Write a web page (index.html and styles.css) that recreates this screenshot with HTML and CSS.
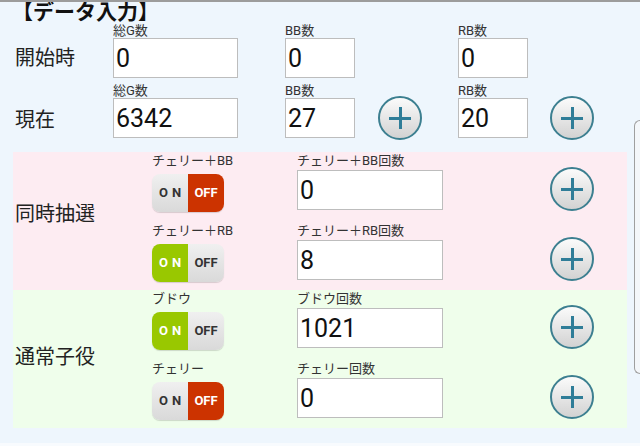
FILE: index.html
```html
<!DOCTYPE html>
<html lang="ja">

<head>
    <meta charset="UTF-8">
    <meta name="viewport" content="width=device-width, initial-scale=1.0">
    <title>データ入力</title>
    <link rel="stylesheet" href="styles.css">
</head>

<body>
    <div class="page">

        <h2 class="title">【データ入力】</h2>

        <div class="counts">
            <div class="row-name">開始時</div>
            <div class="field">
                <p class="cap">総G数</p>
                <input type="text" class="num wide" value="0">
            </div>
            <div class="field">
                <p class="cap">BB数</p>
                <input type="text" class="num short" value="0">
            </div>
            <div></div>
            <div class="field">
                <p class="cap">RB数</p>
                <input type="text" class="num short" value="0">
            </div>
            <div></div>

            <div class="row-name">現在</div>
            <div class="field">
                <p class="cap">総G数</p>
                <input type="text" class="num wide" value="6342">
            </div>
            <div class="field">
                <p class="cap">BB数</p>
                <input type="text" class="num short" value="27">
            </div>
            <div class="field">
                <p class="cap"></p>
                <button class="plus"></button>
            </div>
            <div class="field">
                <p class="cap">RB数</p>
                <input type="text" class="num short" value="20">
            </div>
            <div class="field">
                <p class="cap"></p>
                <button class="plus"></button>
            </div>
        </div>

        <section class="group pink">
            <div class="group-name">同時抽選</div>
            <div class="rows">
                <div class="item">
                    <p class="cap">チェリー＋BB</p>
                    <p class="cap">チェリー＋BB回数</p>
                    <p class="cap"></p>
                    <div class="toggle off"><span class="on-side">ON</span><span class="off-side">OFF</span></div>
                    <input type="text" class="num long" value="0">
                    <button class="plus"></button>
                </div>
                <div class="item">
                    <p class="cap">チェリー＋RB</p>
                    <p class="cap">チェリー＋RB回数</p>
                    <p class="cap"></p>
                    <div class="toggle on"><span class="on-side">ON</span><span class="off-side">OFF</span></div>
                    <input type="text" class="num long" value="8">
                    <button class="plus"></button>
                </div>
            </div>
        </section>

        <section class="group green">
            <div class="group-name">通常子役</div>
            <div class="rows">
                <div class="item">
                    <p class="cap">ブドウ</p>
                    <p class="cap">ブドウ回数</p>
                    <p class="cap"></p>
                    <div class="toggle on"><span class="on-side">ON</span><span class="off-side">OFF</span></div>
                    <input type="text" class="num long" value="1021">
                    <button class="plus"></button>
                </div>
                <div class="item">
                    <p class="cap">チェリー</p>
                    <p class="cap">チェリー回数</p>
                    <p class="cap"></p>
                    <div class="toggle off"><span class="on-side">ON</span><span class="off-side">OFF</span></div>
                    <input type="text" class="num long" value="0">
                    <button class="plus"></button>
                </div>
            </div>
        </section>

        <div class="scroll-tab"></div>
    </div>
</body>

</html>
```

FILE: styles.css
```css
:root {
    --page-bg: #eef6fd;
    --pink-bg: #fdecf2;
    --green-bg: #effeeb;
    --teal: #2f7d98;
    --jp: Roboto, "Noto Sans CJK JP", sans-serif;
}

html {
    background: #f8fbfe;
}

body {
    margin: 0;
    font-family: var(--jp);
    color: #222;
}

.page {
    position: relative;
    height: 441px;
    background: var(--page-bg);
    border-top: 2px solid #9c9c9c;
    overflow: hidden;
}

.title {
    margin: 0 0 0 12px;
    font-size: 21px;
    line-height: 21px;
    font-weight: 700;
    color: #111;
}

.cap {
    margin: 0;
    height: 18px;
    font-size: 13px;
    line-height: 18px;
    color: #333;
    white-space: nowrap;
}

.counts .cap {
    height: 15px;
    line-height: 15px;
}

.num {
    box-sizing: border-box;
    height: 40px;
    margin: 0;
    padding: 0 0 0 2px;
    border: 1px solid #bdbdbd;
    background: #fff;
    font-family: Roboto, sans-serif;
    font-size: 25px;
    color: #111;
    outline: none;
}

.num.wide {
    width: 125px;
}

.num.short {
    width: 70px;
}

.num.long {
    width: 146px;
}

/* top block */
.counts {
    display: grid;
    grid-template-columns: 98px 172px 93px 80px 92px 44px;
    row-gap: 5px;
    margin-left: 15px;
    margin-bottom: 12px;
}

.row-name,
.group-name {
    font-size: 20px;
    color: #222;
}

.row-name {
    align-self: end;
    height: 40px;
    line-height: 40px;
}

.field {
    display: flex;
    flex-direction: column;
}

/* plus button */
.plus {
    position: relative;
    box-sizing: border-box;
    width: 44px;
    height: 44px;
    margin-top: -2px;
    padding: 0;
    border: 2px solid #3c7f90;
    border-radius: 50%;
    background: linear-gradient(#fbfbfb, #d2d2d2);
    cursor: pointer;
}

.plus::before,
.plus::after {
    content: "";
    position: absolute;
    left: 50%;
    top: 50%;
    background: var(--teal);
}

.plus::before {
    width: 22px;
    height: 3px;
    margin: -1.5px 0 0 -11px;
}

.plus::after {
    width: 3px;
    height: 22px;
    margin: -11px 0 0 -1.5px;
}

/* groups */
.group {
    display: flex;
    width: 612px;
    margin-left: 13px;
    padding: 0 0 10px 2px;
}

.pink {
    background: var(--pink-bg);
}

.green {
    background: var(--green-bg);
}

.group-name {
    width: 137px;
    align-self: center;
}

.pink .group-name {
    margin-top: -8px;
}

.green .group-name {
    margin-top: 2px;
}

.rows {
    display: flex;
    flex-direction: column;
    gap: 12px;
}

.item {
    display: grid;
    grid-template-columns: 145px 253px 44px;
    grid-template-rows: 18px 40px;
    align-items: start;
}

.item .plus {
    align-self: center;
}

/* on / off switch */
.toggle {
    display: flex;
    width: 72px;
    height: 38px;
    margin-top: 4px;
    border-radius: 8px;
    overflow: hidden;
    box-shadow: 0 1px 1px rgb(0 0 0 / 15%);
    font-family: Roboto, sans-serif;
    font-size: 13px;
    font-weight: 700;
    line-height: 38px;
    text-align: center;
}

.toggle span {
    width: 36px;
    background: linear-gradient(#f0f0f0, #d9d9d9);
    color: #333;
}

.toggle .on-side {
    letter-spacing: 4px;
    text-indent: 4px;
}

.toggle.on .on-side {
    background: #99c800;
    color: #fff;
}

.toggle.off .off-side {
    background: #cc3300;
    color: #fff;
}

.scroll-tab {
    position: absolute;
    right: 0;
    top: 118px;
    width: 5px;
    height: 252px;
    border: 1px solid #9f9f9f;
    border-right: none;
    border-radius: 8px 0 0 8px;
    background: #f4f7fa;
}
```
